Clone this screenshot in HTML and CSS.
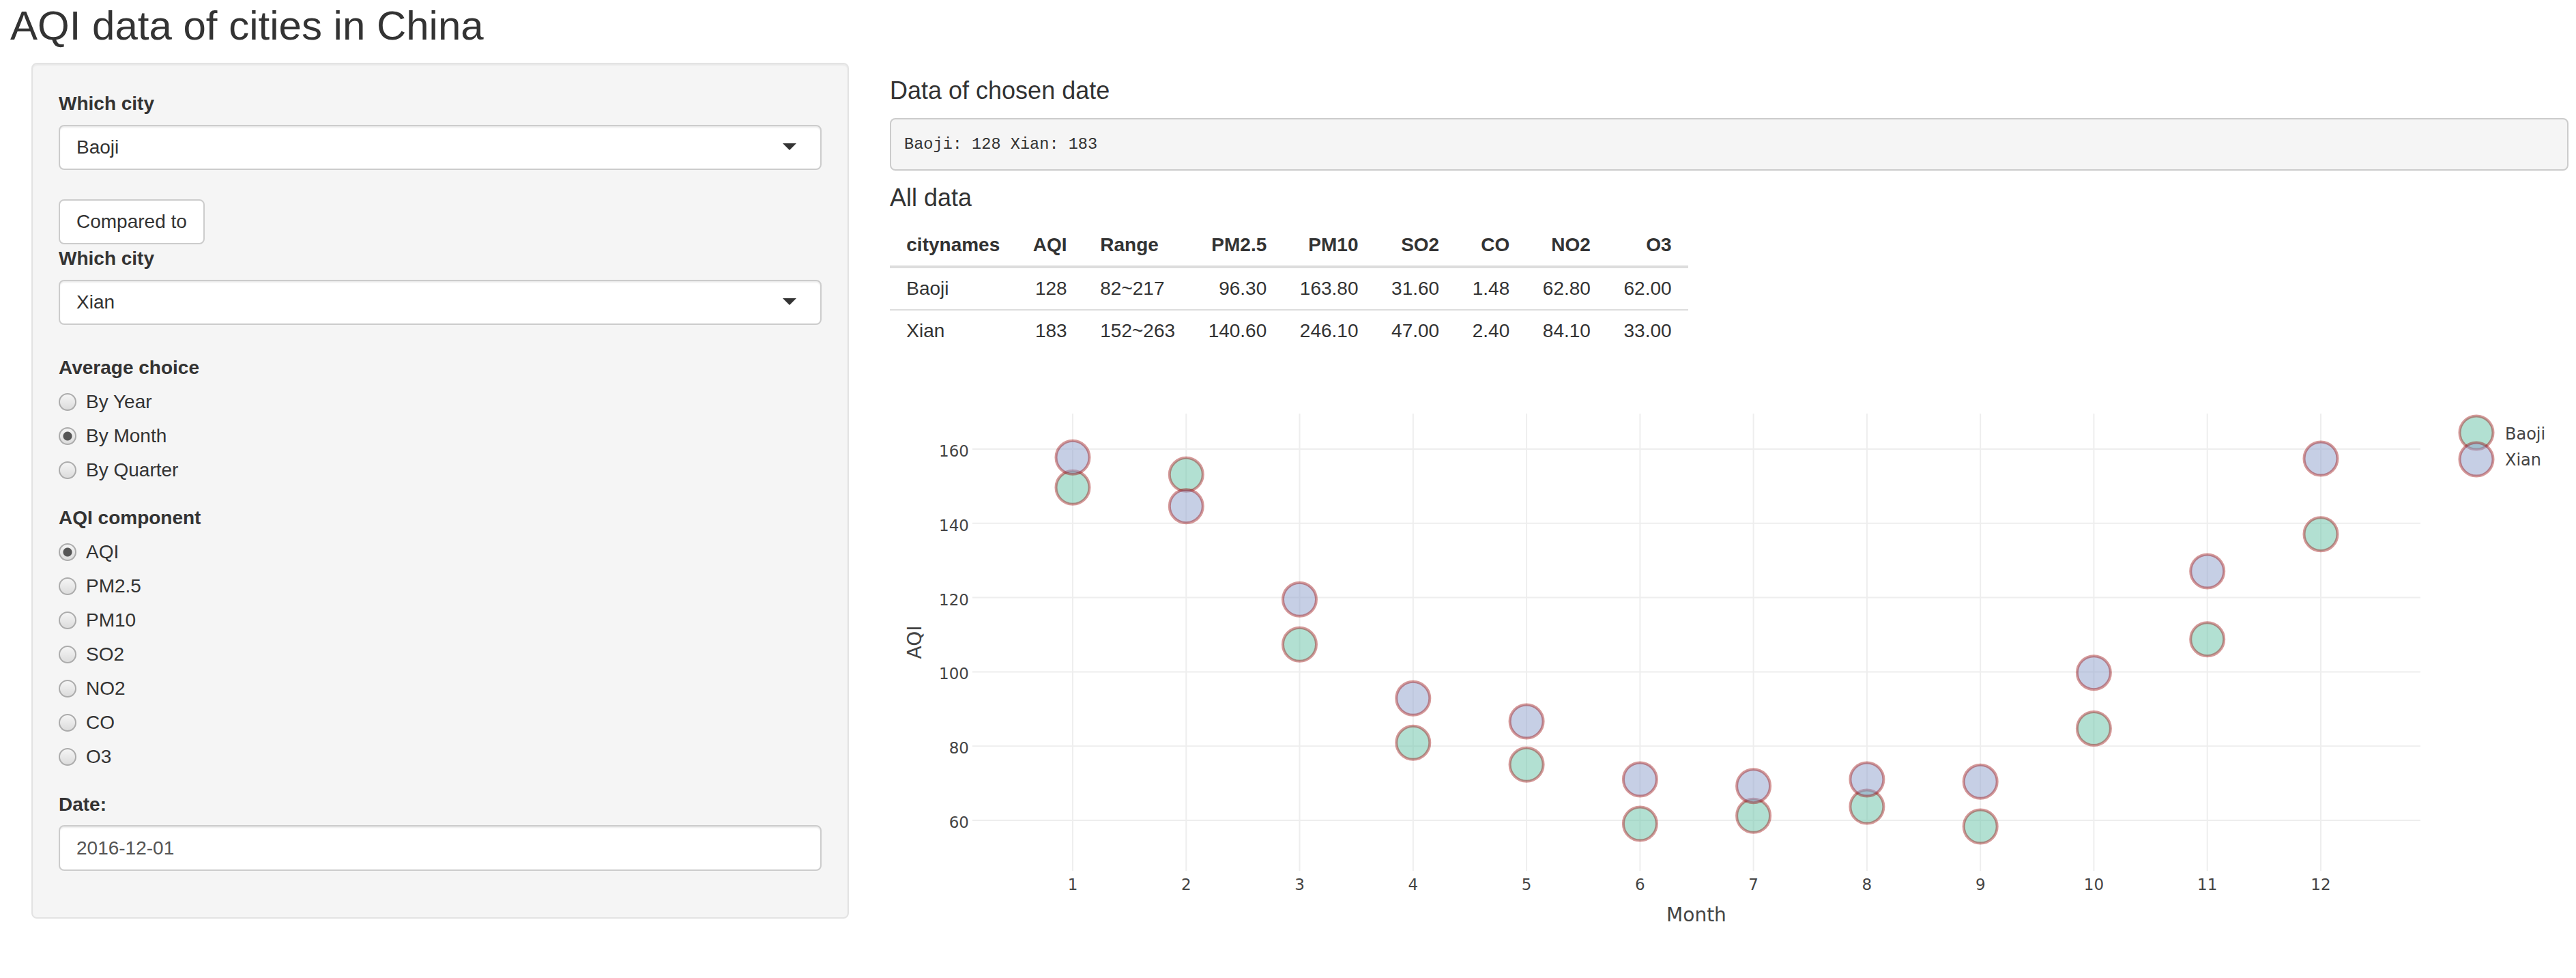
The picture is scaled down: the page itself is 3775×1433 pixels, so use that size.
FILE: index.html
```html
<!DOCTYPE html>
<html lang="en">
<head>
<meta charset="utf-8">
<title>AQI data of cities in China</title>
<link rel="stylesheet" href="styles.css">
</head>
<body>
<h2 class="title">AQI data of cities in China</h2>
<div class="layout">
  <div class="well">
    <div class="form-group select-group">
      <label class="control-label">Which city</label>
      <div class="select"><span>Baoji</span><span class="caret"></span></div>
    </div>
    <button class="btn" type="button">Compared to</button>
    <div class="form-group select-group">
      <label class="control-label">Which city</label>
      <div class="select"><span>Xian</span><span class="caret"></span></div>
    </div>
    <div class="form-group radio-group">
      <label class="control-label">Average choice</label>
      <div class="radio"><input type="radio" name="avg"><span>By Year</span></div>
      <div class="radio"><input type="radio" name="avg" checked><span>By Month</span></div>
      <div class="radio"><input type="radio" name="avg"><span>By Quarter</span></div>
    </div>
    <div class="form-group radio-group">
      <label class="control-label">AQI component</label>
      <div class="radio"><input type="radio" name="comp" checked><span>AQI</span></div>
      <div class="radio"><input type="radio" name="comp"><span>PM2.5</span></div>
      <div class="radio"><input type="radio" name="comp"><span>PM10</span></div>
      <div class="radio"><input type="radio" name="comp"><span>SO2</span></div>
      <div class="radio"><input type="radio" name="comp"><span>NO2</span></div>
      <div class="radio"><input type="radio" name="comp"><span>CO</span></div>
      <div class="radio"><input type="radio" name="comp"><span>O3</span></div>
    </div>
    <div class="form-group date-group">
      <label class="control-label">Date:</label>
      <input class="form-control" type="text" value="2016-12-01">
    </div>
  </div>
  <div class="main">
    <h4 class="heading first">Data of chosen date</h4>
    <pre class="output">Baoji: 128 Xian: 183</pre>
    <h4 class="heading">All data</h4>
    <table class="data-table">
      <thead>
        <tr><th class="txt">citynames</th><th class="num">AQI</th><th class="txt">Range</th><th class="num">PM2.5</th><th class="num">PM10</th><th class="num">SO2</th><th class="num">CO</th><th class="num">NO2</th><th class="num">O3</th></tr>
      </thead>
      <tbody>
        <tr><td class="txt">Baoji</td><td class="num">128</td><td class="txt">82~217</td><td class="num">96.30</td><td class="num">163.80</td><td class="num">31.60</td><td class="num">1.48</td><td class="num">62.80</td><td class="num">62.00</td></tr>
        <tr><td class="txt">Xian</td><td class="num">183</td><td class="txt">152~263</td><td class="num">140.60</td><td class="num">246.10</td><td class="num">47.00</td><td class="num">2.40</td><td class="num">84.10</td><td class="num">33.00</td></tr>
      </tbody>
    </table>
    <svg class="chart" width="2460" height="830" viewBox="0 0 2460 830" xmlns="http://www.w3.org/2000/svg">
      <g class="grid" stroke="#eeeeee" stroke-width="2">
        <line x1="268" y1="65" x2="268" y2="735"/>
        <line x1="434.3" y1="65" x2="434.3" y2="735"/>
        <line x1="600.5" y1="65" x2="600.5" y2="735"/>
        <line x1="766.8" y1="65" x2="766.8" y2="735"/>
        <line x1="933.1" y1="65" x2="933.1" y2="735"/>
        <line x1="1099.4" y1="65" x2="1099.4" y2="735"/>
        <line x1="1265.6" y1="65" x2="1265.6" y2="735"/>
        <line x1="1431.9" y1="65" x2="1431.9" y2="735"/>
        <line x1="1598.2" y1="65" x2="1598.2" y2="735"/>
        <line x1="1764.4" y1="65" x2="1764.4" y2="735"/>
        <line x1="1930.7" y1="65" x2="1930.7" y2="735"/>
        <line x1="2097" y1="65" x2="2097" y2="735"/>
        <line x1="121" y1="117" x2="2243" y2="117"/>
        <line x1="121" y1="225.8" x2="2243" y2="225.8"/>
        <line x1="121" y1="334.6" x2="2243" y2="334.6"/>
        <line x1="121" y1="443.4" x2="2243" y2="443.4"/>
        <line x1="121" y1="552.2" x2="2243" y2="552.2"/>
        <line x1="121" y1="661" x2="2243" y2="661"/>
      </g>
      <g class="ticks ytick" text-anchor="end">
        <text x="116" y="128">160</text>
        <text x="116" y="236.8">140</text>
        <text x="116" y="345.6">120</text>
        <text x="116" y="454.4">100</text>
        <text x="116" y="563.2">80</text>
        <text x="116" y="672">60</text>
      </g>
      <g class="ticks xtick" text-anchor="middle">
        <text x="268" y="763">1</text>
        <text x="434.3" y="763">2</text>
        <text x="600.5" y="763">3</text>
        <text x="766.8" y="763">4</text>
        <text x="933.1" y="763">5</text>
        <text x="1099.4" y="763">6</text>
        <text x="1265.6" y="763">7</text>
        <text x="1431.9" y="763">8</text>
        <text x="1598.2" y="763">9</text>
        <text x="1764.4" y="763">10</text>
        <text x="1930.7" y="763">11</text>
        <text x="2097" y="763">12</text>
      </g>
      <text class="axis-title" x="1182" y="809" text-anchor="middle">Month</text>
      <text class="axis-title" x="46" y="400" text-anchor="middle" transform="rotate(-90 46 400)">AQI</text>
      <g class="pts baoji">
        <circle cx="268" cy="173.3" r="24.5"/>
        <circle cx="434.3" cy="154.3" r="24.5"/>
        <circle cx="600.5" cy="403.3" r="24.5"/>
        <circle cx="766.8" cy="547.3" r="24.5"/>
        <circle cx="933.1" cy="579.3" r="24.5"/>
        <circle cx="1099.4" cy="666" r="24.5"/>
        <circle cx="1265.6" cy="654.3" r="24.5"/>
        <circle cx="1431.9" cy="641" r="24.5"/>
        <circle cx="1598.2" cy="670" r="24.5"/>
        <circle cx="1764.4" cy="526.5" r="24.5"/>
        <circle cx="1930.7" cy="395.7" r="24.5"/>
        <circle cx="2097" cy="241.7" r="24.5"/>
      </g>
      <g class="pts xian">
        <circle cx="268" cy="129.3" r="24.5"/>
        <circle cx="434.3" cy="200.7" r="24.5"/>
        <circle cx="600.5" cy="337.3" r="24.5"/>
        <circle cx="766.8" cy="482.3" r="24.5"/>
        <circle cx="933.1" cy="516" r="24.5"/>
        <circle cx="1099.4" cy="601" r="24.5"/>
        <circle cx="1265.6" cy="610.7" r="24.5"/>
        <circle cx="1431.9" cy="601" r="24.5"/>
        <circle cx="1598.2" cy="604.3" r="24.5"/>
        <circle cx="1764.4" cy="444.7" r="24.5"/>
        <circle cx="1930.7" cy="296" r="24.5"/>
        <circle cx="2097" cy="131" r="24.5"/>
      </g>
      <g class="legend">
        <circle class="baoji-mk" cx="2325" cy="93" r="24.5"/>
        <text x="2367" y="103">Baoji</text>
        <circle class="xian-mk" cx="2325" cy="132" r="24.5"/>
        <text x="2367" y="141">Xian</text>
      </g>
    </svg>
  </div>
</div>
</body>
</html>
```

FILE: styles.css
```css
body {
  margin: 0;
  font-family: "Liberation Sans", Arial, sans-serif;
  color: #333333;
  background: #ffffff;
}

.title {
  margin: 5px 0 20px 15px;
  font-size: 60px;
  line-height: 66px;
  font-weight: normal;
}

.layout {
  display: flex;
  align-items: flex-start;
  gap: 60px;
  padding-left: 46px;
}

.well {
  flex: none;
  width: 1198px;
  box-sizing: border-box;
  margin-top: 1px;
  padding: 38px;
  background: #f5f5f5;
  border: 2px solid #e3e3e3;
  border-radius: 8px;
  box-shadow: inset 0 2px 2px rgba(0, 0, 0, 0.05);
}

.control-label {
  display: block;
  font-size: 28px;
  line-height: 40px;
  font-weight: bold;
  margin-bottom: 10px;
}

.select-group {
  margin-bottom: 43px;
}

.select-group .control-label {
  margin-bottom: 11px;
}

.select {
  height: 66px;
  box-sizing: border-box;
  display: flex;
  align-items: center;
  justify-content: space-between;
  padding: 0 35px 0 24px;
  background: #ffffff;
  border: 2px solid #cccccc;
  border-radius: 8px;
  box-shadow: inset 0 2px 2px rgba(0, 0, 0, 0.075);
  font-size: 28px;
  color: #333333;
}

.caret {
  width: 0;
  height: 0;
  border-style: solid;
  border-width: 10px 10px 0 10px;
  border-color: #333333 transparent transparent transparent;
  margin-top: -2px;
}

.btn {
  display: block;
  height: 66px;
  margin: 0 0 1px;
  padding: 0 24px;
  background: #ffffff;
  border: 2px solid #cccccc;
  border-radius: 8px;
  font-family: "Liberation Sans", Arial, sans-serif;
  font-size: 28px;
  color: #333333;
}

.radio-group {
  margin-bottom: 30px;
}

.radio {
  display: flex;
  align-items: center;
  height: 40px;
  margin-bottom: 10px;
  font-size: 28px;
}

.radio:last-child {
  margin-bottom: 0;
}

.radio input {
  appearance: none;
  -webkit-appearance: none;
  flex: none;
  width: 26px;
  height: 26px;
  margin: 0 14px 0 0;
  box-sizing: border-box;
  border-radius: 50%;
  border: 2px solid #acacac;
  background: linear-gradient(#f5f5f5, #dcdcdc);
}

.radio input:checked {
  background: radial-gradient(circle, #555555 0, #555555 6px, transparent 7px), linear-gradient(#f5f5f5, #dcdcdc);
}

.date-group {
  margin-bottom: 30px;
}

.form-control {
  display: block;
  width: 100%;
  height: 67px;
  box-sizing: border-box;
  padding: 0 24px;
  background: #ffffff;
  border: 2px solid #cccccc;
  border-radius: 8px;
  box-shadow: inset 0 2px 2px rgba(0, 0, 0, 0.075);
  font-family: "Liberation Sans", Arial, sans-serif;
  font-size: 28px;
  color: #555555;
}

.main {
  flex: none;
  width: 2460px;
}

.heading {
  margin: 20px 0;
  font-size: 36px;
  line-height: 39.6px;
  font-weight: normal;
}

.heading.first {
  margin-top: 22px;
}

.output {
  margin: 0 0 20px;
  padding: 19px;
  font-family: "Liberation Mono", "Courier New", monospace;
  font-size: 23.6px;
  line-height: 35px;
  color: #333333;
  background: #f5f5f5;
  border: 2px solid #cccccc;
  border-radius: 8px;
}

.data-table {
  border-collapse: collapse;
  font-size: 28px;
  line-height: 40px;
  margin-bottom: 26px;
}

.data-table th,
.data-table td {
  padding: 10px 24.3px;
}

.data-table th {
  font-weight: bold;
  border-bottom: 4px solid #dddddd;
}

.data-table td {
  border-top: 2px solid #dddddd;
}

.data-table .num {
  text-align: right;
}

.data-table .txt {
  text-align: left;
}

.chart {
  display: block;
}

.ticks text {
  font-family: "DejaVu Sans", Verdana, sans-serif;
  font-size: 23px;
  fill: #444444;
}

.axis-title {
  font-family: "DejaVu Sans", Verdana, sans-serif;
  font-size: 28px;
  fill: #444444;
}

.legend text {
  font-family: "DejaVu Sans", Verdana, sans-serif;
  font-size: 24px;
  fill: #444444;
}

.pts circle,
.legend circle {
  stroke: rgb(152, 0, 0);
  stroke-opacity: 0.4;
  stroke-width: 4;
  fill-opacity: 0.5;
}

.baoji circle,
.legend .baoji-mk {
  fill: #66c2a5;
}

.xian circle,
.legend .xian-mk {
  fill: #8da0cb;
}
```
